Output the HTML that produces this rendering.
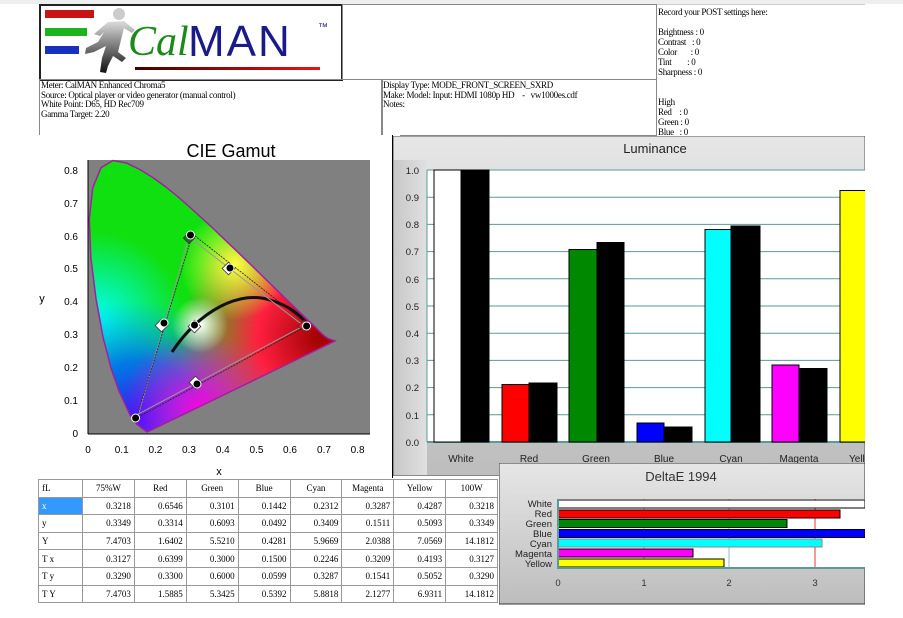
<!DOCTYPE html>
<html><head><meta charset="utf-8"><style>
body{margin:0;width:903px;height:618px;background:#fff;position:relative;overflow:hidden;font-family:"Liberation Serif",serif;}
.a{position:absolute;}
.s{font-size:9px;line-height:9.5px;color:#000;font-family:"Liberation Serif",serif;letter-spacing:-0.3px}
table{border-collapse:collapse;font-family:"Liberation Serif",serif;font-size:9px;table-layout:fixed}
td{border:1px solid #999;height:16.6px;padding:0 3px;text-align:right;line-height:10px;overflow:hidden}
tr td:first-child{text-align:left;}
tr:first-child td{text-align:center}
</style></head><body>
<div class="a" style="left:0;top:0;width:903px;height:4px;background:#eee"></div>
<!-- header boxes -->
<div class="a" style="left:39px;top:4px;width:300px;height:73px;border:2px solid #222;"></div>
<div class="a" style="left:342px;top:4px;width:313px;height:74px;border:1px solid #888;"></div>
<div class="a" style="left:39px;top:79px;width:342px;height:55px;border:1px solid #888;"></div>
<div class="a" style="left:381px;top:79px;width:274px;height:55px;border:1px solid #888;"></div>
<!-- logo -->
<div class="a" style="left:45px;top:10px;width:49px;height:8px;background:#c81414"></div>
<div class="a" style="left:45px;top:28px;width:42px;height:8px;background:#1cb41c"></div>
<div class="a" style="left:45px;top:46px;width:34px;height:8px;background:#1830c0"></div>
<svg class="a" style="left:80px;top:6px" width="60" height="70" viewBox="0 0 60 70">
<defs><linearGradient id="rg" x1="0" y1="0" x2="0" y2="1"><stop offset="0" stop-color="#ddd"/><stop offset="1" stop-color="#111"/></linearGradient></defs>
<circle cx="39" cy="8" r="6" fill="#ccc"/>
<path d="M28 16 L44 15 L55 24 L52 27 L44 22 L40 38 L38 46 L46 52 L42 56 L33 50 L28 60 L26 67 L20 66 L22 52 L26 40 L14 46 L5 48 L6 42 L18 36 L24 26 L20 30 L14 28 Z" fill="url(#rg)"/>
</svg>
<div class="a" style="left:128px;top:20px;font-family:'Liberation Serif',serif;font-style:italic;font-size:42px;color:#1a8a1a;line-height:44px">Cal</div>
<div class="a" style="left:188px;top:20px;font-family:'Liberation Sans',sans-serif;font-size:44px;color:#1a1a8a;line-height:44px;letter-spacing:2px">MAN</div>
<div class="a" style="left:318px;top:22px;font-family:'Liberation Sans',sans-serif;font-size:10px;color:#1a1a8a">™</div>
<div class="a" style="left:135px;top:67px;width:185px;height:3px;background:linear-gradient(90deg,#400,#e11)"></div>
<!-- info text -->
<div class="a s" style="left:41px;top:81px">Meter: CalMAN Enhanced Chroma5<br>Source: Optical player or video generator (manual control)<br>White Point: D65, HD Rec709<br>Gamma Target: 2.20</div>
<div class="a s" style="left:383px;top:81px">Display Type: MODE_FRONT_SCREEN_SXRD<br>Make: Model: Input: HDMI 1080p HD &nbsp;&nbsp;&nbsp;- &nbsp;&nbsp;vw1000es.cdf<br>Notes:</div>
<div class="a s" style="left:658px;top:7px;line-height:10px">Record your POST settings here:<br><br>Brightness : 0<br>Contrast &nbsp;&nbsp;: 0<br>Color &nbsp;&nbsp;&nbsp;&nbsp;&nbsp;&nbsp;: 0<br>Tint &nbsp;&nbsp;&nbsp;&nbsp;&nbsp;&nbsp;&nbsp;: 0<br>Sharpness : 0<br><br><br>High<br>Red &nbsp;&nbsp;&nbsp;: 0<br>Green : 0<br>Blue &nbsp;&nbsp;: 0</div>
<div class="a" style="left:657px;top:4px;width:208px;height:1px;background:#ccc"></div>

<!-- CIE -->
<svg class="a" style="left:30px;top:135px" width="370" height="345" viewBox="30 135 370 345" font-family="Liberation Sans,sans-serif">
<defs>
<clipPath id="loc"><path id="lp" d="M147,432 L136.5,424 L130,415 L118.8,390.5 L111,368 L103,337 L96,298.6 L90.8,257.4 L89.3,219 L92.7,188 L101,167.7 L113,160.5 L126.5,163 L140,169.6 L153,177.6 L165.4,186.6 L177.6,196.4 L189.6,207 L201.7,218 L213.7,229 L225.7,240.6 L237.7,252 L249.4,263.4 L260.7,274.4 L271.6,285 L281.8,294.9 L291.2,304 L299.3,311.8 L306.4,318.7 L312.4,324.4 L317.2,329.1 L321,332.9 L324,335.8 L328,338.5 L335,341 Z"/></clipPath>
<radialGradient id="gB" cx="138" cy="420" r="120" gradientUnits="userSpaceOnUse"><stop offset="0" stop-color="#3010ff"/><stop offset="0.5" stop-color="#0060ff" stop-opacity=".8"/><stop offset="1" stop-color="#00a0ff" stop-opacity="0"/></radialGradient>
<radialGradient id="gC" cx="95" cy="322" r="90" gradientUnits="userSpaceOnUse"><stop offset="0" stop-color="#00ffff"/><stop offset="1" stop-color="#00ffff" stop-opacity="0"/></radialGradient>
<radialGradient id="gR" cx="320" cy="338" r="140" gradientUnits="userSpaceOnUse"><stop offset="0" stop-color="#a00000"/><stop offset="0.45" stop-color="#ff2040"/><stop offset="1" stop-color="#ff2040" stop-opacity="0"/></radialGradient>
<radialGradient id="gM" cx="200" cy="410" r="80" gradientUnits="userSpaceOnUse"><stop offset="0" stop-color="#ff00e0"/><stop offset="1" stop-color="#ff00e0" stop-opacity="0"/></radialGradient>
<radialGradient id="gY" cx="235" cy="265" r="55" gradientUnits="userSpaceOnUse"><stop offset="0" stop-color="#ffff40"/><stop offset="1" stop-color="#ffff40" stop-opacity="0"/></radialGradient>
<radialGradient id="gW" cx="200" cy="325" r="28" gradientUnits="userSpaceOnUse"><stop offset="0" stop-color="#fff"/><stop offset="1" stop-color="#fff" stop-opacity="0"/></radialGradient>
</defs>
<rect x="30" y="135" width="370" height="345" fill="#fff"/>
<rect x="88" y="160" width="282" height="274" fill="#808080"/>
<g clip-path="url(#loc)">
<rect x="80" y="150" width="280" height="290" fill="#10e010"/>
<rect x="80" y="150" width="280" height="290" fill="url(#gC)"/>
<rect x="80" y="150" width="280" height="290" fill="url(#gB)"/>
<rect x="80" y="150" width="280" height="290" fill="url(#gR)"/>
<rect x="80" y="150" width="280" height="290" fill="url(#gM)"/>
<rect x="80" y="150" width="280" height="290" fill="url(#gY)"/>
<rect x="80" y="150" width="280" height="290" fill="url(#gW)"/>
</g>
<use href="#lp" fill="none" stroke="#a020a0" stroke-width="1.5"/>
<line x1="88" y1="160" x2="88" y2="434" stroke="#000"/><line x1="88" y1="434" x2="370" y2="434" stroke="#000"/>
<g font-size="10" fill="#000" text-anchor="end">
<text x="78" y="437">0</text><text x="78" y="404">0.1</text><text x="78" y="371">0.2</text><text x="78" y="338">0.3</text><text x="78" y="305">0.4</text><text x="78" y="272">0.5</text><text x="78" y="240">0.6</text><text x="78" y="207">0.7</text><text x="78" y="174">0.8</text></g>
<g font-size="10" fill="#000" text-anchor="middle">
<text x="88" y="453">0</text><text x="121.7" y="453">0.1</text><text x="155.4" y="453">0.2</text><text x="189" y="453">0.3</text><text x="222.8" y="453">0.4</text><text x="256.5" y="453">0.5</text><text x="290" y="453">0.6</text><text x="324" y="453">0.7</text><text x="357.6" y="453">0.8</text>
<text x="219" y="475" font-size="11">x</text><text x="42" y="302" font-size="11">y</text>
<text x="231" y="157" font-size="18">CIE Gamut</text></g>
<path d="M172,352 C200,310 240,290 270,300 C290,306 300,315 308,325" fill="none" stroke="#111" stroke-width="3"/>
<polygon points="189,237 303.7,325.8 138.5,414" fill="none" stroke="#999" stroke-width="1"/>
<polygon points="192.5,234 308.6,325 136.6,418" fill="none" stroke="#222" stroke-width="0.8" stroke-dasharray="2,1"/>
<g fill="#fff" stroke="#333" stroke-width=".8">
<rect x="157" y="321" width="9" height="9" transform="rotate(45 161.5 325.5)"/>
<rect x="224" y="264" width="9" height="9" transform="rotate(45 228.5 268.5)"/>
<rect x="190" y="322" width="9" height="9" transform="rotate(45 194.5 326.5)"/>
<rect x="191" y="378" width="9" height="9" transform="rotate(45 195.5 382.5)"/>
<rect x="185" y="234" width="8" height="8" fill="#207020" transform="rotate(45 189 238)"/>
<rect x="300" y="322" width="8" height="8" fill="#e03030" transform="rotate(45 304 326)"/>
</g>
<g fill="#000" stroke="#fff" stroke-width="1">
<circle cx="190.5" cy="235" r="4"/><circle cx="306.6" cy="326" r="4"/><circle cx="135.6" cy="418" r="4"/><circle cx="164" cy="323" r="4"/><circle cx="197" cy="384" r="4"/><circle cx="230" cy="268" r="4"/><circle cx="194.5" cy="325" r="4"/></g>
</svg>
<div class="a" style="left:392px;top:135px;width:6px;height:343px;border-left:1px solid #000"></div>

<!-- Luminance -->
<svg class="a" style="left:393px;top:136px" width="472" height="340" viewBox="393 136 472 340" font-family="Liberation Sans,sans-serif">
<defs><linearGradient id="pg" x1="0" y1="0" x2="0" y2="1"><stop offset="0" stop-color="#e6e6e6"/><stop offset="1" stop-color="#bdbdbd"/></linearGradient>
<linearGradient id="pg2" x1="0" y1="0" x2="1" y2="0"><stop offset="0" stop-color="#c8c8c8"/><stop offset="1" stop-color="#e0e0e0"/></linearGradient></defs>
<rect x="393" y="136" width="472" height="340" fill="url(#pg)" stroke="#555"/>
<rect x="394" y="160" width="33" height="315" fill="url(#pg2)"/>
<rect x="427" y="170" width="438" height="272" fill="#fff"/>
<g stroke="#5a9a9a" stroke-width="1">
<line x1="427" y1="170" x2="865" y2="170"/><line x1="427" y1="197.2" x2="865" y2="197.2"/><line x1="427" y1="224.4" x2="865" y2="224.4"/><line x1="427" y1="251.6" x2="865" y2="251.6"/><line x1="427" y1="278.8" x2="865" y2="278.8"/><line x1="427" y1="306" x2="865" y2="306"/><line x1="427" y1="333.2" x2="865" y2="333.2"/><line x1="427" y1="360.4" x2="865" y2="360.4"/><line x1="427" y1="387.6" x2="865" y2="387.6"/><line x1="427" y1="414.8" x2="865" y2="414.8"/>
<line x1="427" y1="170" x2="427" y2="442"/><line x1="427" y1="442" x2="865" y2="442" stroke-width="2"/></g>
<g stroke="#000" stroke-width="1">
<rect x="434" y="170" width="27" height="272" fill="#fff"/><rect x="461" y="170" width="28" height="272" fill="#000"/>
<rect x="502" y="384.5" width="27" height="57.5" fill="#f00"/><rect x="529" y="383" width="28" height="59" fill="#000"/>
<rect x="569" y="249.5" width="28" height="192.5" fill="#080"/><rect x="597" y="242.5" width="27" height="199.5" fill="#000"/>
<rect x="637" y="423" width="27" height="19" fill="#00f"/><rect x="664" y="427" width="28" height="15" fill="#000"/>
<rect x="705" y="229.5" width="26" height="212.5" fill="#0ff"/><rect x="731" y="226" width="29" height="216" fill="#000"/>
<rect x="772" y="365" width="27" height="77" fill="#f0f"/><rect x="799" y="368.5" width="28" height="73.5" fill="#000"/>
<rect x="840" y="190.5" width="26" height="251.5" fill="#ff0"/></g>
<g font-size="9.5" fill="#222" text-anchor="end">
<text x="419" y="174">1.0</text><text x="419" y="201">0.9</text><text x="419" y="228">0.8</text><text x="419" y="255">0.7</text><text x="419" y="283">0.6</text><text x="419" y="310">0.5</text><text x="419" y="337">0.4</text><text x="419" y="364">0.3</text><text x="419" y="391">0.2</text><text x="419" y="419">0.1</text><text x="419" y="446">0.0</text></g>
<g font-size="10" fill="#222" text-anchor="middle">
<text x="461" y="462">White</text><text x="529" y="462">Red</text><text x="596" y="462">Green</text><text x="664" y="462">Blue</text><text x="731" y="462">Cyan</text><text x="799" y="462">Magenta</text>
<text x="655" y="153" font-size="13">Luminance</text></g>
<text x="849" y="462" font-size="10" fill="#222">Yellow</text>
</svg>

<!-- DeltaE -->
<svg class="a" style="left:499px;top:463px" width="366" height="142" viewBox="499 463 366 142" font-family="Liberation Sans,sans-serif">
<rect x="499" y="463" width="366" height="141" fill="url(#pg)" stroke="#333"/>
<rect x="558" y="499" width="307" height="69" fill="#fff"/>
<line x1="644" y1="499" x2="644" y2="568" stroke="#9bb"/><line x1="729" y1="499" x2="729" y2="568" stroke="#9bb"/>
<line x1="815" y1="499" x2="815" y2="568" stroke="#e33"/>
<g stroke="#000" stroke-width="1">
<rect x="558" y="500" width="307" height="8" fill="#fff"/>
<rect x="558" y="510" width="282" height="8" fill="#f00"/>
<rect x="558" y="519.5" width="229" height="8" fill="#080"/>
<rect x="558" y="529.5" width="307" height="8" fill="#00f"/>
<rect x="558" y="539" width="264" height="8" fill="#0ff" stroke="#888"/>
<rect x="558" y="549" width="135" height="8" fill="#f0f"/>
<rect x="558" y="559" width="166" height="8" fill="#ff0"/></g>
<line x1="558" y1="499" x2="558" y2="569" stroke="#5a9a9a" stroke-width="2"/>
<line x1="557" y1="568" x2="865" y2="568" stroke="#5a9a9a" stroke-width="2"/>
<g font-size="9.5" fill="#222" text-anchor="end">
<text x="552" y="507">White</text><text x="552" y="517">Red</text><text x="552" y="527">Green</text><text x="552" y="537">Blue</text><text x="552" y="547">Cyan</text><text x="552" y="557">Magenta</text><text x="552" y="567">Yellow</text></g>
<g font-size="9.5" fill="#333" text-anchor="middle">
<text x="558" y="586">0</text><text x="644" y="586">1</text><text x="729" y="586">2</text><text x="815" y="586">3</text>
<text x="681" y="481" font-size="13">DeltaE 1994</text></g>
</svg>

<!-- Table -->
<table class="a" style="left:38px;top:479px;width:460px;border:1px solid #333">
<colgroup><col style="width:44px"><col><col><col><col><col><col><col><col></colgroup>
<tr><td style="text-align:left">fL</td><td>75%W</td><td>Red</td><td>Green</td><td>Blue</td><td>Cyan</td><td>Magenta</td><td>Yellow</td><td>100W</td></tr>
<tr><td style="background:#3399ff;color:#fff">x</td><td>0.3218</td><td>0.6546</td><td>0.3101</td><td>0.1442</td><td>0.2312</td><td>0.3287</td><td>0.4287</td><td>0.3218</td></tr>
<tr><td>y</td><td>0.3349</td><td>0.3314</td><td>0.6093</td><td>0.0492</td><td>0.3409</td><td>0.1511</td><td>0.5093</td><td>0.3349</td></tr>
<tr><td>Y</td><td>7.4703</td><td>1.6402</td><td>5.5210</td><td>0.4281</td><td>5.9669</td><td>2.0388</td><td>7.0569</td><td>14.1812</td></tr>
<tr><td>T x</td><td>0.3127</td><td>0.6399</td><td>0.3000</td><td>0.1500</td><td>0.2246</td><td>0.3209</td><td>0.4193</td><td>0.3127</td></tr>
<tr><td>T y</td><td>0.3290</td><td>0.3300</td><td>0.6000</td><td>0.0599</td><td>0.3287</td><td>0.1541</td><td>0.5052</td><td>0.3290</td></tr>
<tr><td>T Y</td><td>7.4703</td><td>1.5885</td><td>5.3425</td><td>0.5392</td><td>5.8818</td><td>2.1277</td><td>6.9311</td><td>14.1812</td></tr>
</table>
</body></html>
